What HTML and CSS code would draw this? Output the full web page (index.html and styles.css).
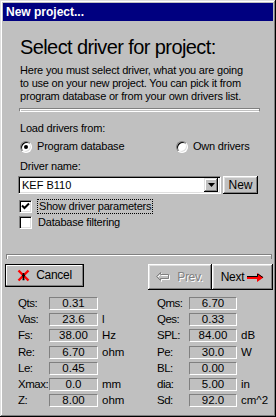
FILE: index.html
```html
<!DOCTYPE html>
<html>
<head>
<meta charset="utf-8">
<title>New project...</title>
<link rel="stylesheet" href="styles.css">
</head>
<body>
<div class="window">
  <div class="titlebar">New project...</div>
  <div class="main">
    <h1 class="heading">Select driver for project:</h1>
    <p class="intro">Here you must select driver, what you are going<br>to use on your new project. You can pick it from<br>program database or from your own drivers list.</p>
    <div class="sep"></div>
    <div class="label load">Load drivers from:</div>
    <div class="radios">
      <div class="opt"><span class="radio on"></span><span>Program database</span></div>
      <div class="opt"><span class="radio"></span><span>Own drivers</span></div>
    </div>
    <div class="label dname">Driver name:</div>
    <div class="comborow">
      <div class="combo">
        <span class="combo-text">KEF B110</span>
        <span class="drop"><svg width="7" height="4" viewBox="0 0 7 4"><path d="M0 0h7L3.5 4z" fill="#000"/></svg></span>
      </div>
      <div class="btn new">New</div>
    </div>
    <div class="check first">
      <span class="box"><svg width="9" height="9" viewBox="0 0 9 9"><path d="M1 3.5 L3.5 6 L8 1.5" fill="none" stroke="#000" stroke-width="2"/></svg></span>
      <span class="focus">Show driver parameters</span>
    </div>
    <div class="check">
      <span class="box"></span>
      <span class="cap">Database filtering</span>
    </div>
  </div>
  <div class="lower">
    <div class="sep2"></div>
    <div class="btnrow">
      <div class="btn cancel">
        <svg class="ico" width="13" height="13" viewBox="0 0 13 13">
          <path d="M1.5 1.5 L11.5 11.5 M11.5 1.5 L1.5 11.5" stroke="#ff0000" stroke-width="2.4" fill="none"/>
          <path d="M6.5 4 L6.5 10 M5 6.5 L8 6.5 M5.5 10.5 L7.5 10.5" stroke="#000" stroke-width="1.6" fill="none"/>
        </svg>
        <span>Cancel</span>
      </div>
      <div class="spacer"></div>
      <div class="btn nav prev">
        <svg class="ico" width="16" height="10" viewBox="0 0 16 10">
          <path d="M6.5 1.5 L2.5 5.5 L6.5 9.5 L6.5 7.5 L14.5 7.5 L14.5 3.5 L6.5 3.5 Z" fill="none" stroke="#fff" stroke-width="1"/>
          <path d="M5.5 0.5 L1.5 4.5 L5.5 8.5 L5.5 6.5 L13.5 6.5 L13.5 2.5 L5.5 2.5 Z" fill="none" stroke="#808080" stroke-width="1"/>
        </svg>
        <span>Prev.</span>
      </div>
      <div class="btn nav next">
        <span>Next</span>
        <svg class="ico" width="17" height="9" viewBox="0 0 17 9">
          <path d="M0 3 L10 3 L10 0 L16.5 4.5 L10 9 L10 6 L0 6 Z" fill="#ff0000"/>
          <path d="M0 3.5 L10.5 3.5 L10.5 1 M11 1 L16 4.5" stroke="#000" stroke-width="1" fill="none"/>
        </svg>
      </div>
    </div>
    <div class="params">
      <span class="lbl">Qts:</span><span class="val">0.31</span><span class="unit"></span>
      <span class="lbl">Qms:</span><span class="val">6.70</span><span class="unit"></span>
      <span class="lbl">Vas:</span><span class="val">23.6</span><span class="unit">l</span>
      <span class="lbl">Qes:</span><span class="val">0.33</span><span class="unit"></span>
      <span class="lbl">Fs:</span><span class="val">38.00</span><span class="unit">Hz</span>
      <span class="lbl">SPL:</span><span class="val">84.00</span><span class="unit">dB</span>
      <span class="lbl">Re:</span><span class="val">6.70</span><span class="unit">ohm</span>
      <span class="lbl">Pe:</span><span class="val">30.0</span><span class="unit">W</span>
      <span class="lbl">Le:</span><span class="val">0.45</span><span class="unit"></span>
      <span class="lbl">BL:</span><span class="val">0.00</span><span class="unit"></span>
      <span class="lbl">Xmax:</span><span class="val">0.0</span><span class="unit">mm</span>
      <span class="lbl">dia:</span><span class="val">5.00</span><span class="unit">in</span>
      <span class="lbl">Z:</span><span class="val">8.00</span><span class="unit">ohm</span>
      <span class="lbl">Sd:</span><span class="val">92.0</span><span class="unit">cm^2</span>
    </div>
  </div>
</div>
</body>
</html>
```
FILE: styles.css
```css
* { box-sizing: border-box; }
html, body { margin: 0; padding: 0; background: #c0c0c0; }
body {
  font-family: "Liberation Sans", Arial, sans-serif;
  font-size: 11px;
  line-height: 13px;
  color: #000;
}
.window {
  width: 276px;
  height: 417px;
  padding: 3px;
  background: #c0c0c0;
  box-shadow: inset -1px -1px #000, inset 1px 1px #dfdfdf, inset -2px -2px #808080, inset 2px 2px #fff;
  overflow: hidden;
}
.titlebar {
  height: 18px;
  background: #000080;
  color: #fff;
  font-weight: bold;
  font-size: 12px;
  line-height: 18px;
  padding-left: 3px;
}
.main { padding: 0 13px 0 17px; letter-spacing: -0.2px; }
.heading {
  margin: 14px 0 0 0;
  font-size: 20px;
  line-height: 24px;
  font-weight: normal;
  letter-spacing: -0.6px;
}
.intro { margin: 5px 0 0 0; }
.sep {
  margin: 5px 0 0 -1px;
  width: 241px;
  height: 4px;
  border-top: 1px solid #808080;
  border-left: 1px solid #808080;
  border-bottom: 1px solid #fff;
  border-right: 1px solid #808080;
  box-shadow: inset 1px 1px #fff;
}
.label.load { margin-top: 10px; }
.radios {
  margin-top: 5px;
  display: grid;
  grid-template-columns: 156px auto;
  height: 13px;
}
.opt { display: flex; align-items: center; gap: 5px; }
.radio {
  width: 12px;
  height: 12px;
  border-radius: 50%;
  border: 1px solid;
  border-color: #808080 #fff #fff #808080;
  box-shadow: inset 1px 1px #000, inset -1px -1px #dfdfdf;
  background: #fff;
  display: flex;
  align-items: center;
  justify-content: center;
  flex: none;
}
.radio.on::after {
  content: "";
  width: 4px;
  height: 4px;
  border-radius: 50%;
  background: #000;
}
.label.dname { margin-top: 7px; }
.comborow {
  margin: 3px 0 0 -2px;
  display: flex;
  gap: 2px;
  height: 18px;
}
.combo {
  width: 203px;
  height: 18px;
  background: #fff;
  border: 1px solid;
  border-color: #808080 #fff #fff #808080;
  box-shadow: inset 1px 1px #000, inset -1px -1px #dfdfdf;
  display: flex;
  align-items: center;
  padding: 2px 2px 2px 3px;
}
.combo-text { flex: 1; letter-spacing: 0; }
.drop {
  width: 14px;
  height: 14px;
  background: #c0c0c0;
  box-shadow: inset -1px -1px #000, inset 1px 1px #dfdfdf, inset -2px -2px #808080, inset 2px 2px #fff;
  display: flex;
  align-items: center;
  justify-content: center;
}
.btn {
  background: #c0c0c0;
  box-shadow: inset -1px -1px #000, inset 1px 1px #fff, inset -2px -2px #808080, inset 2px 2px #dfdfdf;
  display: flex;
  align-items: center;
  justify-content: center;
}
.new { width: 35px; height: 18px; font-size: 12px; letter-spacing: 0; }
.check {
  display: flex;
  align-items: center;
  gap: 5px;
  height: 13px;
  margin: 3px 0 0 -1px;
}
.check.first { margin-top: 6px; }
.box {
  width: 13px;
  height: 13px;
  flex: none;
  background: #fff;
  border: 1px solid;
  border-color: #808080 #fff #fff #808080;
  box-shadow: inset 1px 1px #000, inset -1px -1px #dfdfdf;
  display: flex;
  align-items: center;
  justify-content: center;
}
.focus {
  outline: 1px dotted #000;
  padding: 0 1px;
  height: 13px;
  margin-left: 1px;
}
.cap { margin-left: 1px; }
.lower { padding-left: 2px; }
.sep2 {
  margin: 25px 1px 0 1px;
  height: 5px;
  border-top: 1px solid #808080;
  border-left: 1px solid #808080;
  border-right: 1px solid #808080;
  box-shadow: inset 1px 1px #fff;
}
.btnrow {
  margin-top: 5px;
  display: flex;
  align-items: flex-start;
  font-size: 12px;
  letter-spacing: -0.3px;
}
.spacer { flex: 1; }
.cancel {
  width: 79px;
  height: 23px;
  gap: 6px;
  border: 1px solid #000;
  box-shadow: inset -1px -1px #808080, inset 1px 1px #fff;
}
.nav { height: 26px; }
.prev { width: 64px; gap: 6px; color: #808080; text-shadow: 1px 1px #fff; padding-right: 2px; }
.next { width: 61px; gap: 3px; }
.ico { display: block; flex: none; }
.params {
  margin-top: 7px;
  padding-left: 13px;
  display: grid;
  grid-template-columns: 31px 49px 59px 32px 48px auto;
  grid-auto-rows: 13px;
  row-gap: 3.2px;
  font-size: 11.5px;
  line-height: 12px;
}
.lbl { letter-spacing: -0.5px; white-space: nowrap; }
.val {
  border: 1px solid;
  border-color: #808080 #fff #fff #808080;
  text-align: center;
  line-height: 11px;
}
.unit { padding-left: 4px; }
```
